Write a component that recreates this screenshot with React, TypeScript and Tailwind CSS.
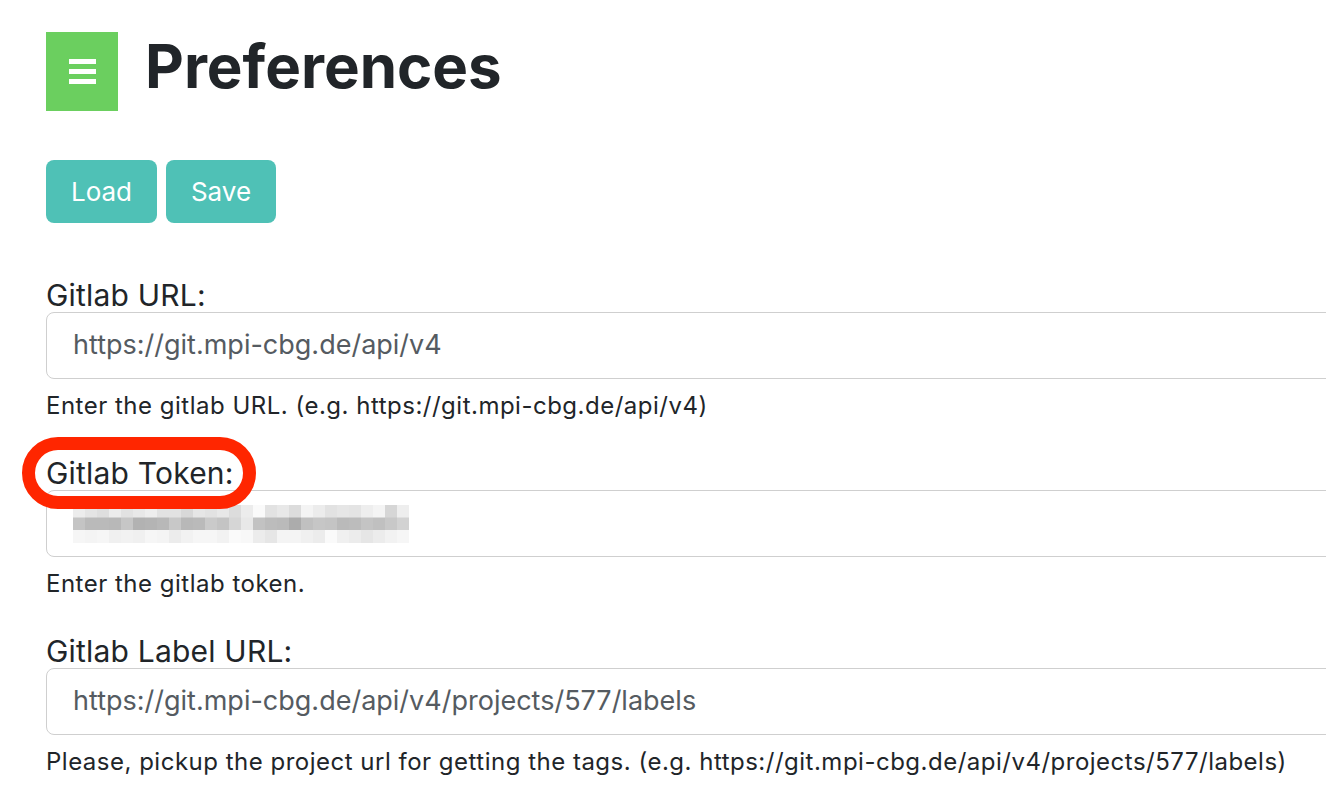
import React from 'react';

const font = { fontFamily: 'Inter, "Noto Sans", sans-serif' };

// pixelated token mosaic, three rows of 12px cells
const tokenRows: number[][] = [
  [236, 228, 222, 236, 226, 232, 238, 226, 226, 216, 230, 226, 232, 220, 236, 250, 226, 232, 220, 244, 236, 226, 230, 228, 238, 244, 214, 238],
  [196, 186, 186, 184, 198, 178, 180, 184, 200, 184, 186, 202, 196, 214, 232, 194, 188, 186, 172, 192, 198, 196, 186, 188, 196, 192, 200, 210],
  [246, 244, 246, 240, 242, 240, 246, 244, 236, 242, 246, 246, 242, 250, 248, 236, 230, 244, 244, 240, 236, 250, 240, 236, 230, 236, 242, 246],
];

function TokenBlur() {
  return (
    <svg width="360" height="40" viewBox="0 0 360 40" className="block">
      {tokenRows.map((row, r) =>
        row.map((v, c) => (
          <rect key={`${r}-${c}`} x={c * 12} y={r * 12.5} width="12" height="13" fill={`rgb(${v},${v},${v})`} />
        ))
      )}
    </svg>
  );
}

function Field({
  label,
  value,
  help,
  highlight,
  token,
}: {
  label: string;
  value?: string;
  help: string;
  highlight?: boolean;
  token?: boolean;
}) {
  return (
    <div className="mb-[36px]">
      <div className="relative">
        <label className="block text-[30px] leading-[34px] tracking-[0.2px] text-[#212529]">{label}</label>
        {highlight && (
          <div className="pointer-events-none absolute left-[-24px] top-[-19px] h-[72px] w-[234px] rounded-full border-[13px] border-[#ff2600]" />
        )}
      </div>
      <div className="flex h-[67px] w-[1320px] items-center rounded-[8px] border border-[#cfcfcf] bg-white pl-[26px] text-[27px] text-[#555b61]">
        {token ? <div className="mt-[3px]"><TokenBlur /></div> : value}
      </div>
      <p className="mt-[13px] text-[24px] leading-[28px] tracking-[0.5px] text-[#212529]">{help}</p>
    </div>
  );
}

export default function App() {
  return (
    <div className="h-[788px] w-[1326px] overflow-hidden bg-white pl-[46px] pt-[32px]" style={font}>
      <div className="flex items-start gap-[27px]">
        <button className="flex h-[79px] w-[72px] flex-col items-center justify-center gap-[5px] bg-[#6bcf5f]">
          <span className="block h-[5px] w-[27px] bg-white" />
          <span className="block h-[5px] w-[27px] bg-white" />
          <span className="block h-[5px] w-[27px] bg-white" />
        </button>
        <h1 className="mt-[4px] text-[60px] font-bold leading-none text-[#212529]">Preferences</h1>
      </div>

      <div className="mt-[49px] flex gap-[9px]">
        <button className="h-[63px] w-[111px] rounded-[8px] bg-[#4fc1b6] text-[26px] text-white">Load</button>
        <button className="h-[63px] w-[110px] rounded-[8px] bg-[#4fc1b6] text-[26px] text-white">Save</button>
      </div>

      <div className="mt-[55px]">
        <Field
          label="Gitlab URL:"
          value="https://git.mpi-cbg.de/api/v4"
          help="Enter the gitlab URL. (e.g. https://git.mpi-cbg.de/api/v4)"
        />
        <Field label="Gitlab Token:" token highlight help="Enter the gitlab token." />
        <Field
          label="Gitlab Label URL:"
          value="https://git.mpi-cbg.de/api/v4/projects/577/labels"
          help="Please, pickup the project url for getting the tags. (e.g. https://git.mpi-cbg.de/api/v4/projects/577/labels)"
        />
      </div>
    </div>
  );
}
